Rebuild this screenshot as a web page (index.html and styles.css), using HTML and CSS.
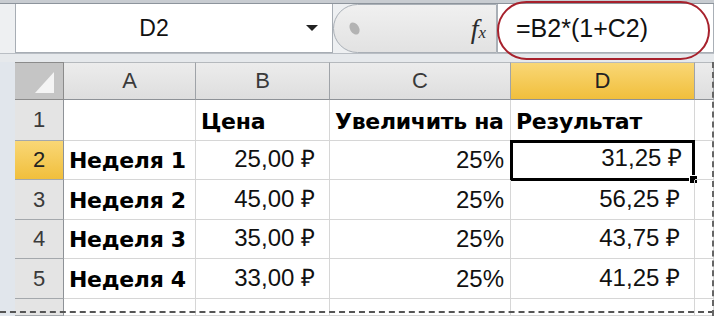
FILE: index.html
```html
<!DOCTYPE html>
<html>
  <head>
    <meta charset="utf-8">
    <title>Excel formula</title>
    <link rel="stylesheet" href="styles.css">
  </head>
  <body>
    <div class="app">
      <div class="topband"></div>
      <div class="fbar">
        <div class="namebox">
          <span class="ref">D2</span>
          <span class="drop"></span>
        </div>
        <div class="grip">
          <span class="knob"></span>
          <span class="fx"><i>f</i><small>x</small></span>
        </div>
        <div class="formula">=B2*(1+C2)</div>
        <div class="mark"></div>
      </div>
      <div class="gap"></div>

      <div class="sheet">
        <div class="hd corner"><span class="tri"></span></div>
        <div class="hd col">A</div>
        <div class="hd col">B</div>
        <div class="hd col">C</div>
        <div class="hd col active">D</div>
        <div class="hd col"></div>

        <div class="hd row">1</div>
        <div class="cell"></div>
        <div class="cell b">Цена</div>
        <div class="cell b">Увеличить на</div>
        <div class="cell b">Результат</div>
        <div class="cell"></div>

        <div class="hd row active">2</div>
        <div class="cell b">Неделя 1</div>
        <div class="cell n">25,00 ₽</div>
        <div class="cell n pct">25%</div>
        <div class="cell n sel">31,25 ₽<span class="handle"></span></div>
        <div class="cell"></div>

        <div class="hd row">3</div>
        <div class="cell b">Неделя 2</div>
        <div class="cell n">45,00 ₽</div>
        <div class="cell n pct">25%</div>
        <div class="cell n">56,25 ₽</div>
        <div class="cell"></div>

        <div class="hd row">4</div>
        <div class="cell b">Неделя 3</div>
        <div class="cell n">35,00 ₽</div>
        <div class="cell n pct">25%</div>
        <div class="cell n">43,75 ₽</div>
        <div class="cell"></div>

        <div class="hd row">5</div>
        <div class="cell b">Неделя 4</div>
        <div class="cell n">33,00 ₽</div>
        <div class="cell n pct">25%</div>
        <div class="cell n">41,25 ₽</div>
        <div class="cell"></div>

        <div class="hd row"></div>
        <div class="cell"></div>
        <div class="cell"></div>
        <div class="cell"></div>
        <div class="cell"></div>
        <div class="cell"></div>

        <div class="pagebreak-h"></div>
        <div class="pagebreak-v"></div>
      </div>
    </div>
  </body>
</html>
```

FILE: styles.css
```css
body, html { margin: 0; padding: 0; background: #fff; font-family: "Liberation Sans", Arial, sans-serif; }
.app { width: 714px; height: 316px; overflow: hidden; background: #e1e6ec; position: relative; }

.topband { height: 4px; background: #c8ccd1; border-bottom: 1px solid #8d949c; box-sizing: border-box; }
.fbar { display: flex; height: 49px; padding-left: 15px; position: relative; background: #eef0f2; }
.namebox { width: 318px; display: flex; align-items: center; background: #fff; border: 1px solid #a7adb4; border-top: none; box-sizing: border-box; }
.ref { flex: 1; text-align: center; font-size: 23px; color: #111; padding-right: 14px; }
.drop { width: 0; height: 0; border-left: 6px solid transparent; border-right: 6px solid transparent; border-top: 6px solid #222; margin-right: 14px; }
.grip { width: 164px; display: flex; align-items: center; justify-content: space-between; background: linear-gradient(#f0f0f0, #e2e2e2); border: 1px solid #a9afb6; border-radius: 26px 0 0 26px; box-sizing: border-box; padding: 0 10px 0 16px; }
.knob { width: 9px; height: 13px; border-radius: 50%; background: #b3b3b3; transform: rotate(-30deg); }
.fx { font-family: "Liberation Serif", serif; color: #2b2b2b; line-height: 1; white-space: nowrap; }
.fx i { font-size: 28px; }
.fx small { font-size: 17px; font-style: italic; }
.formula { flex: 1; background: #fff; font-size: 25px; color: #111; display: flex; align-items: center; padding-left: 18px; border: 1px solid #a9afb6; border-top: none; }
.mark { position: absolute; left: 497px; top: -3px; width: 213px; height: 59px; border: 2px solid #a7212c; border-radius: 30px; box-sizing: border-box; }

.gap { height: 9px; background: #e6e9ec; border-top: 1px solid #b9bec4; box-sizing: border-box; }

.sheet { display: grid; margin-left: 15px; grid-template-columns: 49px 132px 134px 181px 184px 19px; grid-template-rows: 38px 41px 39px 40px 39px 40px 17px; background: #fff; position: relative; }
.hd { background: linear-gradient(#ececec, #dedede); color: #3a3a3a; font-size: 22px; display: flex; align-items: center; justify-content: center; box-sizing: border-box; }
.col { border-right: 1px solid #9fa3a8; border-bottom: 1px solid #8e9297; border-top: 1px solid #b5b9bd; }
.row { background: #e4e4e4; border-right: 1px solid #8e9297; border-bottom: 1px solid #a4a8ac; }
.hd.active { background: linear-gradient(#f9d776, #f1bf3c); color: #222; }
.corner { background: #c5c5c5; border: 1px solid #8b8b8b; border-left: none; position: relative; }
.tri { position: absolute; right: 9px; bottom: 6px; width: 0; height: 0; border-left: 19px solid transparent; border-bottom: 21px solid #f4f4f4; }

.cell { border-right: 1px solid #d6d6d6; border-bottom: 1px solid #d6d6d6; box-sizing: border-box; font-size: 24px; color: #111; display: flex; align-items: flex-end; padding: 0 6px 5px; white-space: nowrap; position: relative; }
.b { font-family: "DejaVu Sans", Verdana, sans-serif; font-weight: bold; font-size: 22px; color: #000; padding-bottom: 6px; padding-left: 5px; letter-spacing: -0.3px; }
.n { justify-content: flex-end; padding-right: 14px; }
.pct { padding-right: 6px; }
.sel { border: 3px solid #000; margin: -1px 0 -1px -1px; padding-right: 10px; }
.handle { position: absolute; right: -6px; bottom: -6px; width: 7px; height: 7px; background: #000; border: 1px solid #fff; }

.pagebreak-h { position: absolute; left: -15px; right: 0; top: 249px; border-top: 2px dashed #555; }
.pagebreak-v { position: absolute; top: 0; bottom: 0; left: 697px; border-left: 2px dashed #666; }
```
